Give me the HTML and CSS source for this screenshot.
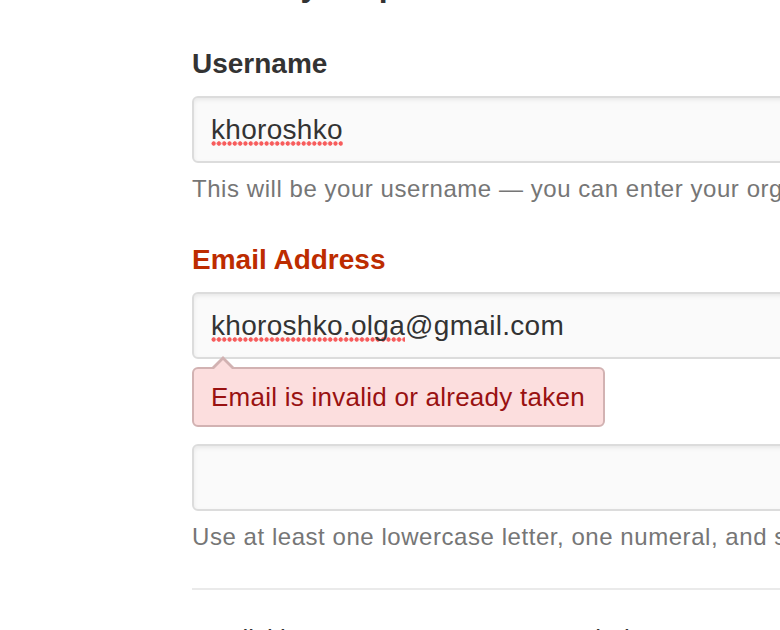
FILE: index.html
```html
<!DOCTYPE html>
<html lang="en">
<head>
<meta charset="utf-8">
<title>Join GitHub</title>
<link rel="stylesheet" href="styles.css">
</head>
<body>
<main class="page">
  <h1 class="title">Create your personal account</h1>

  <div class="group">
    <label class="label" for="username">Username</label>
    <div class="field" id="username"><span class="misspelled">khoroshko</span></div>
    <p class="note">This will be your username — you can enter your organization’s username next.</p>
  </div>

  <div class="group errored">
    <label class="label" for="email">Email Address</label>
    <div class="field" id="email"><span class="misspelled">khoroshko.olga</span>@gmail.com</div>
    <div class="error">Email is invalid or already taken</div>
  </div>

  <div class="group">
    <label class="label label-covered" for="password">Password</label>
    <div class="field" id="password"></div>
    <p class="note">Use at least one lowercase letter, one numeral, and seven characters.</p>
  </div>

  <hr class="rule">

  <p class="tos">By clicking on “Create an account” below, you are agreeing to the Terms of Service and the Privacy Policy.</p>
</main>
</body>
</html>
```

FILE: styles.css
```css
html, body {
  margin: 0;
  padding: 0;
  background: #fff;
  overflow: hidden;
}

body {
  font-family: "Liberation Sans", Arial, sans-serif;
  color: #333;
}

.page {
  width: 1000px;
  padding-left: 192px;
}

.title {
  margin: -35px 0 39px;
  font-size: 32px;
  line-height: 40px;
  font-weight: 700;
  color: #333;
}

.group {
  margin-bottom: 34px;
}

.group.errored {
  position: relative;
  margin-bottom: 33px;
}

.label {
  display: block;
  margin-bottom: 12px;
  font-size: 28px;
  line-height: 40px;
  font-weight: 700;
  color: #333;
}

/* the label sits underneath the error popover, which hides it */
.label-covered {
  visibility: hidden;
}

.errored .label {
  color: #bd2c00;
}

.field {
  box-sizing: border-box;
  height: 67px;
  width: 100%;
  padding: 0 18px 0 17px;
  display: flex;
  align-items: center;
  font-size: 28px;
  letter-spacing: 0.3px;
  color: #333;
  background: #fafafa;
  border: 2px solid #dcdcdc;
  border-radius: 6px;
  box-shadow: inset 0 2px 4px rgba(0, 0, 0, 0.075);
  white-space: nowrap;
}

.misspelled {
  background-image: radial-gradient(circle, #f75c5c 1.9px, rgba(247, 92, 92, 0) 2.5px);
  background-size: 5.3px 5px;
  background-repeat: repeat-x;
  background-position: 0 100%;
}

.note {
  margin: 9px 0 0;
  font-size: 24px;
  line-height: 34px;
  letter-spacing: 0.55px;
  color: #767676;
  white-space: nowrap;
}

.error {
  position: absolute;
  top: calc(100% + 8px);
  left: 0;
  z-index: 10;
  padding: 10px 18px 10px 17px;
  font-size: 26px;
  line-height: 36px;
  letter-spacing: 0.25px;
  color: #991111;
  background: #fcdede;
  border: 2px solid #d2b2b2;
  border-radius: 6px;
  white-space: nowrap;
}

.error::before,
.error::after {
  content: "";
  position: absolute;
  width: 0;
  height: 0;
  border-style: solid;
  border-color: transparent;
}

.error::before {
  top: -24px;
  left: 18px;
  border-width: 11px;
  border-bottom-color: #d2b2b2;
}

.error::after {
  top: -18px;
  left: 20px;
  border-width: 9px;
  border-bottom-color: #fcdede;
}

.rule {
  height: 2px;
  margin: 29px 0 0;
  border: 0;
  background: #eaeaea;
}

.tos {
  margin: 31px 0 0;
  font-size: 26px;
  line-height: 36px;
  color: #333;
  white-space: nowrap;
}
```
